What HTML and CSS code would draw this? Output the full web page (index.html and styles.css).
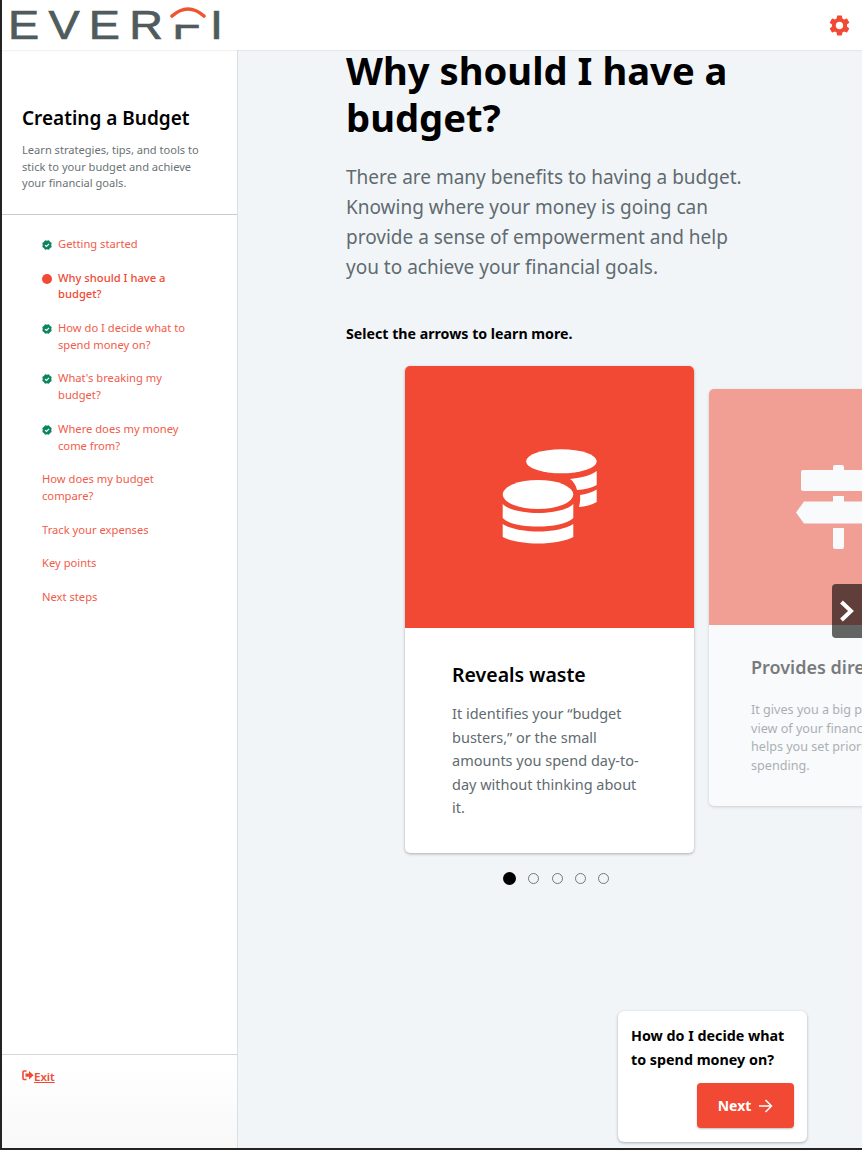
FILE: index.html
```html
<!DOCTYPE html>
<html lang="en">

<head>
  <meta charset="UTF-8">
  <meta name="viewport" content="width=device-width, initial-scale=1.0">
  <title>Creating a Budget</title>

  <link rel="stylesheet" href="styles.css">
</head>

<body>
  <svg class="defs" width="0" height="0">
    <symbol id="badge" viewBox="0 0 10 10">
      <circle cx="5" cy="5" r="4.2" fill="#0b8560"></circle>
      <rect x="1.2" y="1.2" width="7.6" height="7.6" rx="1" fill="#0b8560" transform="rotate(22.5 5 5)"></rect>
      <rect x="1.2" y="1.2" width="7.6" height="7.6" rx="1" fill="#0b8560" transform="rotate(67.5 5 5)"></rect>
      <path d="M3 5.1 L4.5 6.5 L7 3.8" fill="none" stroke="#fff" stroke-width="1.2"></path>
    </symbol>
  </svg>

  <header class="topbar">
    <div class="logo">
      <span class="logo-text">EVERFI</span>
      <svg class="logo-arc" width="230" height="50" viewBox="0 0 230 50">
        <rect x="168" y="6" width="40" height="18.500" fill="#fff"></rect>
        <path d="M172 16 Q188 2 204 16" fill="none" stroke="#f0532f" stroke-width="3.6" stroke-linecap="round"></path>
      </svg>
    </div>
    <svg class="gear" width="25" height="25" viewBox="0 0 24 24">
      <path fill="#f14933" d="M19.14 12.94c.04-.3.06-.61.06-.94 0-.32-.02-.64-.07-.94l2.03-1.58c.18-.14.23-.41.12-.61l-1.92-3.32c-.12-.22-.37-.29-.59-.22l-2.39.96c-.5-.38-1.03-.7-1.62-.94l-.36-2.54c-.04-.24-.24-.41-.48-.41h-3.84c-.24 0-.43.17-.47.41l-.36 2.54c-.59.24-1.13.57-1.62.94l-2.39-.96c-.22-.08-.47 0-.59.22L2.74 8.87c-.12.21-.08.47.12.61l2.03 1.58c-.05.3-.09.63-.09.94s.02.64.07.94l-2.03 1.58c-.18.14-.23.41-.12.61l1.92 3.32c.12.22.37.29.59.22l2.39-.96c.5.38 1.03.7 1.62.94l.36 2.54c.05.24.24.41.48.41h3.84c.24 0 .44-.17.47-.41l.36-2.54c.59-.24 1.13-.56 1.62-.94l2.39.96c.22.08.47 0 .59-.22l1.92-3.32c.12-.22.07-.47-.12-.61l-2.01-1.58zM12 15.6c-1.98 0-3.6-1.62-3.6-3.6s1.62-3.6 3.6-3.6 3.6 1.62 3.6 3.6-1.62 3.6-3.6 3.6z"></path>
    </svg>
  </header>

  <div class="page">
    <aside class="sidebar">
      <div class="intro">
        <h2>Creating a Budget</h2>
        <p>Learn strategies, tips, and tools to stick to your budget and achieve your financial goals.</p>
      </div>

      <ul class="lessons">
        <li class="lesson"><svg class="badge"><use href="#badge"></use></svg><a>Getting started</a></li>
        <li class="lesson active"><span class="dot"></span><a>Why should I have a<br>budget?</a></li>
        <li class="lesson"><svg class="badge"><use href="#badge"></use></svg><a>How do I decide what to<br>spend money on?</a></li>
        <li class="lesson"><svg class="badge"><use href="#badge"></use></svg><a>What's breaking my<br>budget?</a></li>
        <li class="lesson"><svg class="badge"><use href="#badge"></use></svg><a>Where does my money<br>come from?</a></li>
        <li class="lesson plain"><a>How does my budget<br>compare?</a></li>
        <li class="lesson plain"><a>Track your expenses</a></li>
        <li class="lesson plain"><a>Key points</a></li>
        <li class="lesson plain"><a>Next steps</a></li>
      </ul>

      <div class="exit">
        <svg width="12" height="11" viewBox="0 0 12 11">
          <path d="M4.5 1 H2 Q1 1 1 2 V8.5 Q1 9.5 2 9.5 H4.5" fill="none" stroke="#f14933" stroke-width="1.6"></path>
          <path d="M3.5 3.6 H7 V1 L11.6 5.2 L7 9.4 V6.8 H3.5 Z" fill="#f14933"></path>
        </svg>
        <a href="#">Exit</a>
      </div>
    </aside>

    <main class="content">
      <h1>Why should I have a budget?</h1>
      <p class="lead">There are many benefits to having a budget. Knowing where your money is going can provide a sense of empowerment and help you to achieve your financial goals.</p>
      <p class="hint">Select the arrows to learn more.</p>

      <div class="carousel">
        <div class="track">
          <article class="card">
            <div class="card-img">
              <svg width="140" height="130" viewBox="0 2 140 130">
                <g fill="#fff">
                  <ellipse cx="81.4" cy="31.3" rx="35.3" ry="12"></ellipse>
                  <path d="M90 49 C100 48 110 46 116.7 41 V55 C112 58 104 59.5 97 60 C96 55 93 51 90 49 Z"></path>
                  <path d="M100 65 C106 64 112 62.5 116.7 59.5 V72 C112 75 105 76.5 99 77 C100 73 100.5 69 100 65 Z"></path>
                  <ellipse cx="58" cy="64.5" rx="35.3" ry="14.5"></ellipse>
                  <path d="M22.7 74 C28 80 45 83 58 83 C71 83 88 80 93.3 74 V88 C88 94 72 96.500 58 96.500 C44 96.500 28 94 22.7 88 Z"></path>
                  <path d="M22.7 94 C30 99 45 101.500 58 101.500 C71 101.500 86 99 93.3 94 V107 C86 111 72 113.500 58 113.500 C44 113.500 30 111 22.7 107 Z"></path>
                </g>
              </svg>
            </div>
            <div class="card-body">
              <h3>Reveals waste</h3>
              <p>It identifies your “budget busters,” or the small amounts you spend day-to-day without thinking about it.</p>
            </div>
          </article>

          <article class="card card-next">
            <div class="card-img">
              <svg width="84" height="84" viewBox="0 0 84 84">
                <g fill="#fff">
                  <path d="M37 5 V2 Q37 0 39 0 H46 Q48 0 48 2 V5 Z"></path>
                  <path d="M7 5 H79 L84 15.500 L79 26 H7 Q5 26 5 24 V7 Q5 5 7 5 Z"></path>
                  <rect x="37" y="31" width="11" height="6"></rect>
                  <path d="M8 36.500 H77 Q79 36.500 79 38.500 V56.500 Q79 58.500 77 58.500 H8 L0 47.500 Z"></path>
                  <path d="M37 63 H48 V82 Q48 84 46 84 H39 Q37 84 37 82 Z"></path>
                </g>
              </svg>
            </div>
            <div class="card-body">
              <h3>Provides direction</h3>
              <p>It gives you a big picture<br>view of your finances. It<br>helps you set priorities for<br>spending.</p>
            </div>
          </article>
        </div>

        <button class="arrow" type="button">
          <svg width="18" height="24" viewBox="0 0 18 24">
            <path d="M3.500 3 L13 12 L3.500 21" fill="none" stroke="#fff" stroke-width="4"></path>
          </svg>
        </button>
      </div>

      <div class="dots">
        <span class="page-dot current"></span>
        <span class="page-dot"></span>
        <span class="page-dot"></span>
        <span class="page-dot"></span>
        <span class="page-dot"></span>
      </div>

      <div class="next-card">
        <p>How do I decide what to spend money on?</p>
        <button class="next-btn" type="button">
          Next
          <svg width="15" height="14" viewBox="0 0 15 14">
            <path d="M1 7 H13.500 M7.500 1 L13.500 7 L7.500 13" fill="none" stroke="#fff" stroke-width="1.5"></path>
          </svg>
        </button>
      </div>
    </main>
  </div>
</body>

</html>
```

FILE: styles.css
```css
* {
  margin: 0;
  padding: 0;
  box-sizing: border-box;
}

html,
body {
  height: 100%;
}

body {
  display: flex;
  flex-direction: column;
  padding: 0 0 2px 2px;
  background-color: #232323;
  font-family: "Noto Sans", "Liberation Sans", sans-serif;
  overflow: hidden;
}

.defs {
  position: absolute;
}

.topbar {
  flex: none;
  height: 50px;
  margin-left: -2px;
  padding-right: 10px;
  display: flex;
  justify-content: space-between;
  align-items: center;
  background-color: #fff;
  border-left: 2px solid #232323;
  box-shadow: 0 1px 1px rgba(0, 0, 0, 0.05);
  position: relative;
  z-index: 5;
}

.logo {
  width: 230px;
  height: 50px;
  margin-left: -2px;
  position: relative;
}

.logo-text {
  display: inline-block;
  margin-left: 8px;
  font-family: "Liberation Sans", sans-serif;
  font-size: 41px;
  line-height: 51px;
  letter-spacing: 8.100px;
  color: #4f5b5c;
  -webkit-text-stroke: 0.7px #4f5b5c;
  transform: scaleX(1.14);
  transform-origin: left center;
  white-space: nowrap;
}

.logo-arc {
  position: absolute;
  top: 0;
  left: 0;
}

.page {
  flex: 1;
  min-height: 0;
  display: flex;
}

.sidebar {
  flex: none;
  width: 236px;
  display: flex;
  flex-direction: column;
  background: linear-gradient(to bottom, #fff 92%, #f8f8f8 100%);
  border-right: 1px solid #dcdfe2;
}

.intro {
  height: 165px;
  padding: 56px 20px 0 20px;
  border-bottom: 1px solid #c9cccd;
}

.intro h2 {
  font-size: 19px;
  line-height: 24px;
  font-weight: 600;
  color: #000;
}

.intro p {
  margin-top: 12px;
  font-size: 11.100px;
  line-height: 16.500px;
  color: #6a7275;
}

.lessons {
  flex: 1;
  list-style: none;
  padding: 21px 0 0 40px;
  font-size: 11.200px;
  line-height: 16.800px;
  color: #f15b4a;
}

.lesson {
  display: flex;
  align-items: flex-start;
  margin-bottom: 16.800px;
}

.lesson a {
  margin-left: 6px;
}

.lesson.plain a {
  margin-left: 0;
}

.lesson.active {
  color: #f14933;
  font-weight: 500;
}

.badge {
  flex: none;
  width: 10px;
  height: 10px;
  margin-top: 4px;
}

.dot {
  flex: none;
  width: 10px;
  height: 10px;
  margin-top: 4px;
  border-radius: 50%;
  background-color: #f14933;
}

.exit {
  height: 94px;
  padding: 14px 0 0 20px;
  display: flex;
  align-items: flex-start;
  border-top: 1px solid #d4d6d8;
  font-size: 11.500px;
  line-height: 16px;
  font-weight: 600;
}

.exit svg {
  margin-top: 1px;
}

.exit a {
  color: #f14933;
}

.content {
  flex: 1;
  min-width: 0;
  padding-left: 108px;
  background-color: #f2f5f8;
  overflow: hidden;
  position: relative;
}

.content h1 {
  width: 420px;
  margin-top: -3px;
  font-size: 38.200px;
  line-height: 47px;
  font-weight: 700;
  color: #000;
}

.lead {
  width: 400px;
  margin-top: 21px;
  font-size: 19px;
  line-height: 30px;
  color: #5f6b70;
}

.hint {
  margin-top: 42px;
  font-size: 14.200px;
  line-height: 20px;
  font-weight: 700;
  color: #000;
}

.carousel {
  margin-top: 22px;
  position: relative;
}

.track {
  display: flex;
  align-items: flex-start;
  gap: 15px;
  margin-left: 59px;
}

.card {
  flex: none;
  width: 289px;
  height: 487px;
  background-color: #fff;
  border-radius: 5px;
  box-shadow: 0 1px 3px rgba(0, 0, 0, 0.3);
  overflow: hidden;
}

.card-img {
  height: 262px;
  display: flex;
  justify-content: center;
  align-items: center;
  background-color: #f14933;
}

.card-body {
  padding: 33px 50px 0 47px;
}

.card h3 {
  font-size: 19.500px;
  line-height: 28px;
  font-weight: 600;
  color: #000;
}

.card p {
  margin-top: 13px;
  font-size: 14.500px;
  line-height: 23.500px;
  color: #5f6b70;
}

.card-next {
  width: 258px;
  height: 417px;
  margin-top: 23px;
  opacity: 0.5;
}

.card-next .card-img {
  height: 236px;
}

.card-next .card-body {
  padding: 29px 42px 0;
}

.card-next h3 {
  font-size: 18px;
  line-height: 26px;
}

.card-next p {
  margin-top: 21px;
  font-size: 12.600px;
  line-height: 18.700px;
  white-space: nowrap;
}

.arrow {
  position: absolute;
  top: 218px;
  right: 0;
  width: 30px;
  height: 54px;
  padding-left: 6px;
  display: flex;
  align-items: center;
  justify-content: flex-start;
  background-color: rgba(0, 0, 0, 0.6);
  border: none;
  border-radius: 4px 0 0 4px;
}

.dots {
  width: 289px;
  margin: 19px 0 0 65.500px;
  display: flex;
  justify-content: center;
  align-items: center;
  gap: 12.400px;
}

.page-dot {
  width: 11px;
  height: 11px;
  border: 1.500px solid #777;
  border-radius: 50%;
}

.page-dot.current {
  width: 13px;
  height: 13px;
  border: none;
  background-color: #000;
}

.next-card {
  position: absolute;
  top: 961px;
  left: 380px;
  width: 189px;
  height: 131px;
  padding: 13px 13px 14px;
  display: flex;
  flex-direction: column;
  background-color: #fff;
  border-radius: 6px;
  box-shadow: 0 1px 3px rgba(0, 0, 0, 0.3);
}

.next-card p {
  font-size: 14.300px;
  line-height: 24px;
  font-weight: 700;
  color: #000;
}

.next-btn {
  width: 97px;
  height: 45px;
  margin-top: auto;
  align-self: flex-end;
  display: flex;
  justify-content: center;
  align-items: center;
  gap: 7px;
  font-family: inherit;
  font-size: 14px;
  font-weight: 700;
  color: #fff;
  background-color: #f14933;
  border: none;
  border-radius: 4px;
  box-shadow: 0 1px 2px rgba(0, 0, 0, 0.25);
}
```
